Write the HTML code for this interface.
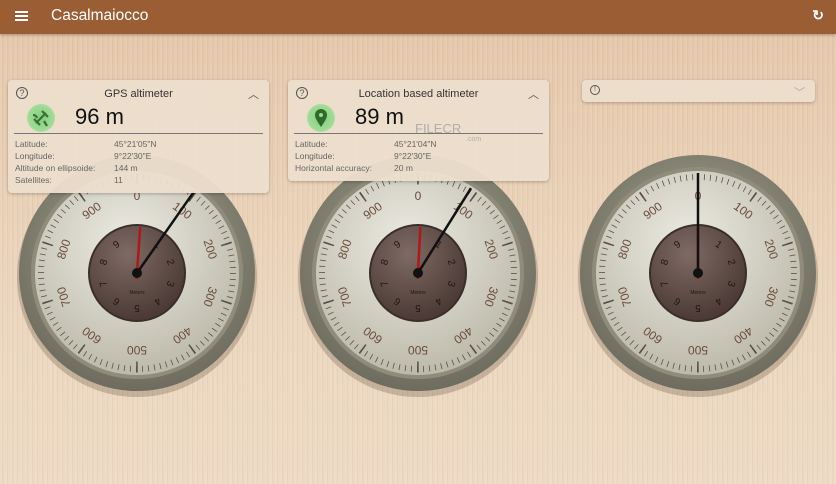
<!DOCTYPE html>
<html><head><meta charset="utf-8"><style>
*{margin:0;padding:0;box-sizing:border-box}
body{width:836px;height:484px;overflow:hidden;font-family:"Liberation Sans",sans-serif;background:#e6ccb1;position:relative}
.wood{position:absolute;inset:0;background:repeating-linear-gradient(90deg,rgba(255,255,255,0.08) 0 2px,rgba(150,100,60,0.06) 2px 3px,rgba(255,255,255,0) 3px 5px),linear-gradient(180deg,#e4c6a8,#ebd5bd 60%,#eedac4)}
.hdr{position:absolute;left:0;top:0;width:836px;height:34px;background:#9b5e34;color:#fff;box-shadow:0 1px 3px rgba(0,0,0,.3)}
.hdr .t{position:absolute;left:51px;top:7px;font-size:15.5px}
.card{position:absolute;background:rgba(237,222,205,0.95);border-radius:4px;box-shadow:0 1px 3px rgba(0,0,0,.25);color:#333}
.card .ttl{position:absolute;top:8px;width:100%;text-align:center;font-size:11px}
.card .q{position:absolute;left:8px;top:7px;width:12px;height:12px;border:1.2px solid #555;border-radius:50%;font-size:9px;text-align:center;line-height:10px;color:#555}
.card .up{position:absolute;right:10px;top:6px;font-size:11px;color:#555}
.card .val{position:absolute;left:67px;top:24px;font-size:22px;color:#111}
.card .icon{position:absolute;left:19px;top:24px;width:28px;height:28px;border-radius:50%;background:radial-gradient(#7ed07a,#9edb95 60%,rgba(160,220,150,0.3))}
.card .line{position:absolute;left:6px;right:6px;top:53px;border-top:1.5px solid #777}
.card .rows{position:absolute;left:7px;top:58px;font-size:8.5px;color:#666;line-height:12px}
.card .vals{position:absolute;left:106px;top:58px;font-size:8.5px;color:#666;line-height:12px}
</style></head><body>
<div class="wood"></div>
<svg width="836" height="484" style="position:absolute;left:0;top:0">
<defs>
<radialGradient id="ring" cx="50%" cy="40%" r="60%"><stop offset="0" stop-color="#a7a593"/><stop offset="1" stop-color="#6e6c5e"/></radialGradient>
<radialGradient id="face" cx="45%" cy="35%" r="70%"><stop offset="0" stop-color="#ecebe2"/><stop offset="1" stop-color="#b9b6a6"/></radialGradient>
<radialGradient id="inner" cx="40%" cy="30%" r="70%"><stop offset="0" stop-color="#7f6a64"/><stop offset="1" stop-color="#4b3a35"/></radialGradient>
<g id="g">
<circle r="120" fill="rgba(80,60,40,0.25)" cy="4"/>
<circle r="118" fill="url(#ring)"/>
<circle r="106" fill="#8f8c7c"/>
<circle r="102" fill="url(#face)"/>
<circle r="96" fill="none" stroke="#5a5048" stroke-width="6" stroke-dasharray="0.8 5.232" transform="rotate(-90)"/>
<circle r="94" fill="none" stroke="#5a5048" stroke-width="11" stroke-dasharray="1.6 57.46" transform="rotate(-90.5)"/>
<g fill="#6a4a3c" font-size="12" text-anchor="middle">
<text y="-73" >0</text>
<text y="-73" transform="rotate(36)">100</text>
<text y="-73" transform="rotate(72)">200</text>
<text y="-73" transform="rotate(108)">300</text>
<text y="-73" transform="rotate(144)">400</text>
<text y="-73" transform="rotate(180)">500</text>
<text y="-73" transform="rotate(216)">600</text>
<text y="-73" transform="rotate(252)">700</text>
<text y="-73" transform="rotate(288)">800</text>
<text y="-73" transform="rotate(324)">900</text>
</g>
<circle r="49" fill="#3b2e2a"/>
<circle r="47" fill="url(#inner)"/>
<g fill="#1e1614" font-size="10" text-anchor="middle">
<text y="-32" transform="rotate(36)">1</text>
<text y="-32" transform="rotate(72)">2</text>
<text y="-32" transform="rotate(108)">3</text>
<text y="-32" transform="rotate(144)">4</text>
<text y="-32" transform="rotate(180)">5</text>
<text y="-32" transform="rotate(216)">6</text>
<text y="-32" transform="rotate(252)">7</text>
<text y="-32" transform="rotate(288)">8</text>
<text y="-32" transform="rotate(324)">9</text>
<text y="21" font-size="5">Meters</text>
</g>
</g>
</defs>
<g transform="translate(137,273)"><use href="#g"/>
<line x1="0" y1="6" x2="0" y2="-46" stroke="#b01818" stroke-width="2.5" transform="rotate(4)"/>
<line x1="0" y1="0" x2="0" y2="-100" stroke="#111" stroke-width="2.5" transform="rotate(35)"/><circle r="5" fill="#111"/></g>
<g transform="translate(418,273)"><use href="#g"/>
<line x1="0" y1="6" x2="0" y2="-46" stroke="#b01818" stroke-width="2.5" transform="rotate(3)"/>
<line x1="0" y1="0" x2="0" y2="-100" stroke="#111" stroke-width="2.5" transform="rotate(32)"/><circle r="5" fill="#111"/></g>
<g transform="translate(698,273)"><use href="#g"/>
<line x1="0" y1="6" x2="0" y2="-46" stroke="#b01818" stroke-width="2.5"/>
<line x1="0" y1="0" x2="0" y2="-100" stroke="#111" stroke-width="2.5"/><circle r="5" fill="#111"/></g>
</svg>
<div class="hdr"><div style="position:absolute;left:15px;top:11px;width:13px;height:2px;background:#fff;box-shadow:0 4px 0 #fff,0 8px 0 #fff"></div><div class="t">Casalmaiocco</div><div style="position:absolute;right:12px;top:7px;font-size:14px;font-weight:bold">↻</div></div>
<div class="card" style="left:8px;top:80px;width:261px;height:113px">
<div class="q">?</div><div class="ttl">GPS altimeter</div><div class="up">︿</div>
<div class="icon"><svg width="28" height="28"><path d="M9 19 L19 9 M15 7 l6 6 M7 15 l6 6 M17 17 l3 5 M6 11 q3 0 4 3" stroke="#3d6e35" stroke-width="2.2" fill="none"/></svg></div>
<div class="val">96 m</div><div class="line"></div>
<div class="rows">Latitude:<br>Longitude:<br>Altitude on ellipsoide:<br>Satellites:</div>
<div class="vals">45°21'05"N<br>9°22'30"E<br>144 m<br>11</div>
</div>
<div class="card" style="left:288px;top:80px;width:261px;height:101px">
<div class="q">?</div><div class="ttl">Location based altimeter</div><div class="up">︿</div>
<div class="icon"><svg width="28" height="28"><path d="M14 23 C10 17 8 14 8 11 a6 6 0 0 1 12 0 c0 3-2 6-6 12z" fill="#2f6a2c"/><circle cx="14" cy="11" r="2" fill="#9edb95"/></svg></div>
<div class="val">89 m</div><div class="line"></div>
<div class="rows">Latitude:<br>Longitude:<br>Horizontal accuracy:</div>
<div class="vals">45°21'04"N<br>9°22'30"E<br>20 m</div>
<div style="position:absolute;left:127px;top:41px;font-size:13px;color:#999;opacity:.7">FILECR</div>
<div style="position:absolute;left:178px;top:56px;font-size:7px;color:#999;opacity:.7">.com</div>
</div>
<div class="card" style="left:582px;top:80px;width:233px;height:22px">
<div class="q" style="top:5px;left:8px;width:10px;height:10px;font-size:7px;line-height:8px">!</div><div class="up" style="top:4px;opacity:.4">﹀</div>
</div>
</body></html>
